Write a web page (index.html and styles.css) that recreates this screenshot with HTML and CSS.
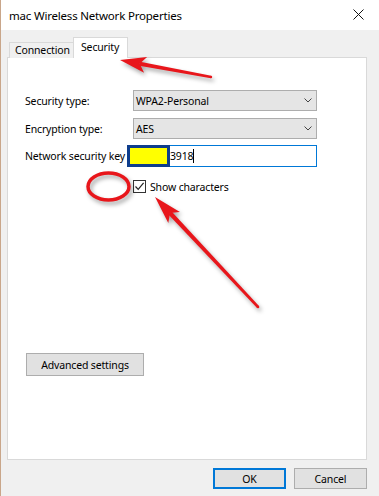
FILE: index.html
```html
<!DOCTYPE html>
<html>
<head>
<meta charset="utf-8">
<link rel="stylesheet" href="styles.css">
</head>
<body>
<div class="window">
  <div class="titlebar">
    <span class="title">mac Wireless Network Properties</span>
    <svg class="close" width="11" height="11" viewBox="0 0 11 11"><path d="M0.5 0.5L10.5 10.5M10.5 0.5L0.5 10.5" stroke="#111" stroke-width="1" fill="none"/></svg>
  </div>
  <div class="content">
    <div class="tabs">
      <div class="tab">Connection</div>
      <div class="tab active">Security</div>
    </div>
    <div class="panel">
      <div class="row r1">
        <span class="label">Security type:</span>
        <div class="select"><span>WPA2-Personal</span><svg width="8" height="5" viewBox="0 0 8 5"><path d="M0.5 0.5L4 4L7.5 0.5" stroke="#444" fill="none"/></svg></div>
      </div>
      <div class="row r2">
        <span class="label">Encryption type:</span>
        <div class="select"><span>AES</span><svg width="8" height="5" viewBox="0 0 8 5"><path d="M0.5 0.5L4 4L7.5 0.5" stroke="#444" fill="none"/></svg></div>
      </div>
      <div class="row r3">
        <span class="label">Network security key</span>
        <div class="textbox"><span class="keytext">3918</span><span class="caret"></span></div>
      </div>
      <div class="checkrow">
        <span class="checkbox"><svg width="11" height="11" viewBox="0 0 11 11"><path d="M1.5 5.5L4.2 8.3L9.6 1.8" stroke="#222" stroke-width="1.2" fill="none"/></svg></span>
        <span>Show characters</span>
      </div>
      <button class="btn adv">Advanced settings</button>
    </div>
    <div class="actions">
      <button class="btn ok">OK</button>
      <button class="btn">Cancel</button>
    </div>
  </div>
  <div class="redact"></div>
  <svg class="annot" width="379" height="496" viewBox="0 0 379 496">
    <g fill="#e8161b" stroke="none">
      <polygon points="120,60 144.1,72.7 139.7,63.7 147.1,56.9"/>
      <polygon points="139.3,65.7 140.1,61.7 211.2,75.8 210.8,78.2"/>
      <circle cx="211" cy="77" r="1.2"/>
      <polygon points="155,197 168.3,222.9 170,213.1 179.9,211.9"/>
      <polygon points="168.4,214.6 171.6,211.6 259,306.1 257.1,307.9"/>
      <circle cx="258" cy="307" r="1.3"/>
    </g>
    <ellipse cx="108.5" cy="186.5" rx="20.5" ry="13.5" fill="none" stroke="#e8161b" stroke-width="3.5"/>
  </svg>
</div>
</body>
</html>
```
FILE: styles.css
```css
html, body {
  margin: 0;
  padding: 0;
}
body {
  font-family: "Noto Sans", "Open Sans", sans-serif;
  font-size: 10.5px;
  letter-spacing: -0.15px;
  color: #000;
  background: #f0f0f0;
}
.window {
  position: relative;
  width: 379px;
  height: 496px;
  background: #f0f0f0;
  box-shadow: inset 1px 0 0 #c9a68a;
  overflow: hidden;
}
.titlebar {
  height: 30px;
  background: #fff;
  display: flex;
  align-items: center;
  justify-content: space-between;
  padding: 0 15px 0 9px;
  box-shadow: inset 1px 0 0 #c9a68a;
}
.title {
  font-size: 11.5px;
  letter-spacing: -0.2px;
  color: #000;
}
.close {
  display: block;
  margin-top: -1px;
}
.content {
  padding: 7px 12px 0 7px;
}
.tabs {
  display: flex;
  align-items: flex-end;
  margin-left: 2px;
  margin-bottom: -1px;
  height: 21px;
}
.tab {
  box-sizing: border-box;
  height: 16px;
  border: 1px solid #d9d9d9;
  border-bottom: none;
  background: #f0f0f0;
  padding: 0 0 0 5px;
  line-height: 15px;
  width: 65px;
  white-space: nowrap;
}
.tab.active {
  position: relative;
  z-index: 1;
  height: 21px;
  width: 55px;
  margin-left: -1px;
  background: #fff;
  padding: 0 0 0 7px;
  line-height: 18px;
}
.panel {
  box-sizing: border-box;
  height: 403px;
  border: 1px solid #d9d9d9;
  background: #fff;
  padding: 32px 0 0 17px;
}
.row {
  display: flex;
  align-items: center;
}
.label {
  width: 108px;
  flex: none;
  white-space: nowrap;
}
.r1 { margin-bottom: 7px; }
.r2 { margin-bottom: 6px; }
.select {
  box-sizing: border-box;
  width: 184px;
  height: 21px;
  border: 1px solid #adadad;
  background: #e5e5e5;
  display: flex;
  align-items: center;
  justify-content: space-between;
  padding: 0 4px 0 2px;
}
.select svg {
  display: block;
}
.textbox {
  box-sizing: border-box;
  width: 184px;
  height: 22px;
  border: 1px solid #0078d7;
  background: #fff;
  display: flex;
  align-items: center;
  padding-left: 36px;
}
.caret {
  width: 1px;
  height: 14px;
  background: #000;
  margin-left: 0;
}
.checkrow {
  display: flex;
  align-items: center;
  gap: 4px;
  margin-top: 13px;
  padding-left: 108px;
  height: 13px;
}
.checkbox {
  box-sizing: border-box;
  width: 13px;
  height: 13px;
  border: 1px solid #333;
  background: #fff;
  display: flex;
  align-items: center;
  justify-content: center;
}
.checkbox svg { display: block; }
.btn {
  box-sizing: border-box;
  font-family: "Noto Sans", "Open Sans", sans-serif;
  font-size: 10.5px;
  letter-spacing: -0.15px;
  color: #000;
  background: #e1e1e1;
  border: 1px solid #adadad;
  padding: 0;
  margin: 0;
}
.adv {
  display: block;
  width: 118px;
  height: 23px;
  margin: 160px 0 0 1px;
}
.actions {
  display: flex;
  justify-content: flex-end;
  gap: 8px;
  margin-top: 8px;
}
.actions .btn {
  width: 73px;
  height: 21px;
}
.actions .ok {
  border: 2px solid #0078d7;
}
.redact {
  position: absolute;
  left: 127px;
  top: 145px;
  width: 43px;
  height: 22px;
  box-sizing: border-box;
  border: 3px solid #0e3d8c;
  background: #ffff00;
}
.annot {
  position: absolute;
  left: 0;
  top: 0;
  pointer-events: none;
  filter: drop-shadow(2px 3px 2px rgba(0, 0, 0, 0.35));
}
```
